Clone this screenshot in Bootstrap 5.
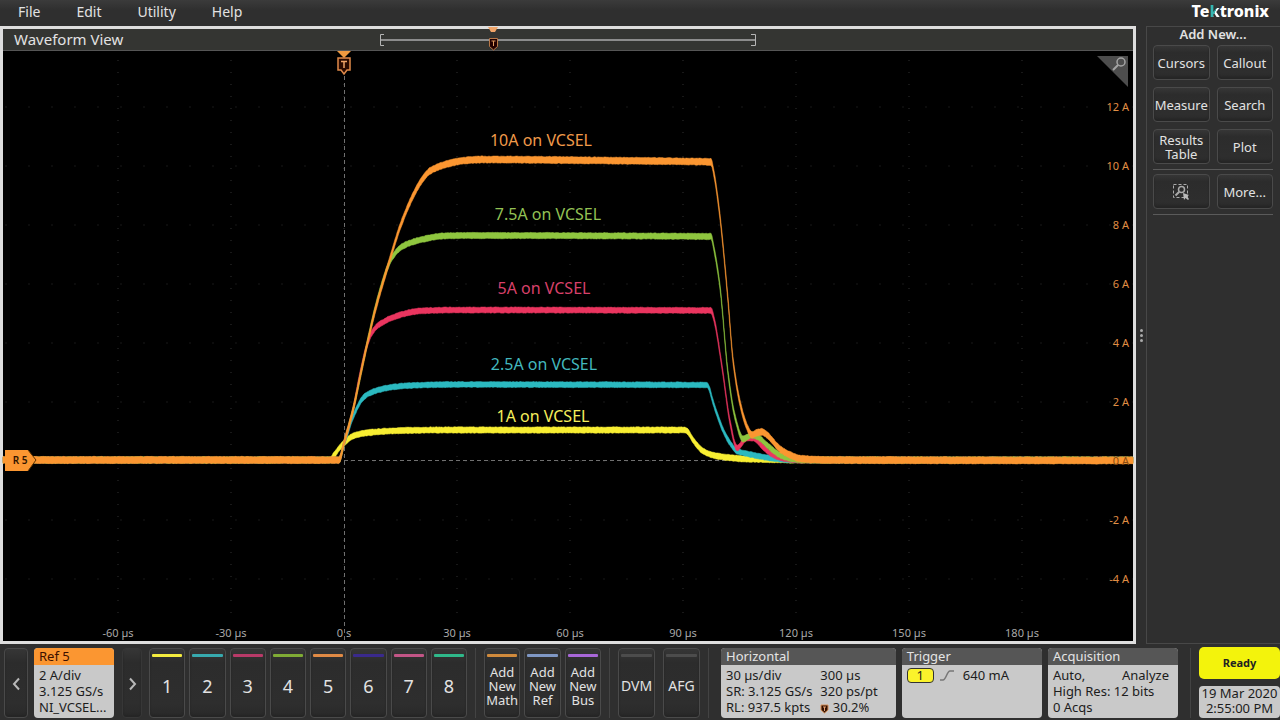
<!DOCTYPE html>
<html lang="en">
<head>
<meta charset="utf-8">
<meta name="viewport" content="width=device-width, initial-scale=1">
<title>Tektronix – Waveform View</title>
<link href="https://cdn.jsdelivr.net/npm/bootstrap@5.3.0/dist/css/bootstrap.min.css" rel="stylesheet">
<style>
  :root { --chrome: #2f2f2f; --line: #484848; --ink: #e2e2e2; --orange: #fb9631; }
  body { background: var(--chrome); color: var(--ink); font: 13px/16px "Noto Sans", sans-serif; }
  .menubar { height: 26px; background: linear-gradient(#3b3b3b, #2f2f2f 10px); }
  .menubar .menu-item { color: var(--ink); font-size: 14px; line-height: 23px; text-decoration: none; }
  .menus { gap: 36px; padding-left: 18px; }
  .brand-name { font-size: 16px; line-height: 22px; font-weight: 800; color: #fff; padding-right: 11px; }
  .brand-name span { color: transparent; background: linear-gradient(115deg, #35b5b0 55%, #fff 56%); background-clip: text; -webkit-background-clip: text; }

  .scope-view { border: 3px solid #dedede; background: #000; min-width: 0; }
  .view-head { display: grid; grid-template-columns: 1fr auto 1fr; height: 22px; background: #343532; border-bottom: 1px solid #555; }
  .view-title { font-size: 15px; line-height: 21px; padding-left: 11px; }
  .plot svg, .view-head svg { display: block; overflow: visible; }
  .zoom-corner { position: absolute; top: 5px; right: 5px; width: 31px; height: 31px; border: 0; padding: 0; background: none; }
  svg text { font-family: "Noto Sans", sans-serif; }
  .tick-label { font-size: 11px; }
  .trace-label { font-size: 16px; }

  .grip { width: 10px; }
  .grip i { width: 3px; height: 3px; background: #aaa; border-radius: 50%; }
  .grip { gap: 2px; }
  .side { width: 134px; border: 1px solid var(--line); border-right: 0; padding: 0 7px 0 6px; }
  .side h2 { font-size: 13px; line-height: 14px; font-weight: 600; }
  .side .pair { display: grid; grid-template-columns: 1fr 1fr; gap: 7px 7px; }
  .side hr { margin: 5px 0 4px; border-color: #5a5a5a; opacity: 1; }
  .key { color: var(--ink); background: linear-gradient(#363636, #2c2c2c 20%, #2e2e2e 80%, #292929); border: 1px solid #4a4a4a; border-radius: 4px; box-shadow: inset 0 -2px 2px #252525; padding: 0; line-height: 14px; }
  .side .key { height: 35px; }

  .dock { height: 76px; padding: 4px 0 2px 4px; }
  .dock .key { height: 70px; min-width: 0; position: relative; padding-top: 5px; }
  .dock .nav-key { width: 24px; padding: 0; }
  .dock .nav-key.flat { width: 20px; border-color: #373737; margin: 0 7px 0 8px; }
  .dock .key.lit::before { content: ""; position: absolute; left: 2px; right: 2px; top: 5px; height: 3px; border-radius: 1px; background: var(--c); }
  .keys { display: grid; grid-auto-flow: column; grid-auto-columns: 1fr; gap: 4px; }
  .keys.channels { width: 318px; }
  .keys.channels .key { font-size: 18px; }
  .keys.adds { width: 117px; }
  .keys.tools { width: 82px; gap: 8px; }
  .keys.tools .key { font-size: 14px; }
  .rule { width: 1px; background: #434343; margin: 0 8px; }
  .panels { gap: 6px; }
  .info { background: #c9c9c9; color: #1c1c1c; border-radius: 4px; overflow: hidden; height: 70px; }
  .info h3 { font-size: 13px; line-height: 17px; font-weight: 400; margin: 0; padding: 0 5px; background: #565656; color: #e4e4e4; }
  .info .lines { padding: 2px 5px 0; white-space: nowrap; }
  .info.ref { width: 80px; margin-left: 6px; }
  .info.ref h3 { background: var(--orange); color: #3c1000; }
  .info.horizontal { flex: 176 1 0; }
  .info.trigger { flex: 141 1 0; }
  .info.acq { flex: 131 1 0; }
  .src { background: #fbf32b; border: 1px solid #333; border-radius: 4px; width: 27px; height: 15px; line-height: 13px; text-align: center; }
  .clock { width: 81px; }
  .ready { height: 32px; border: 0; border-radius: 5px; background: #f3f30c; color: #222; font-size: 11px; font-weight: 700; margin-top: -1px; }
  .stamp { height: 32px; border-radius: 4px; background: #c9c9c9; color: #1c1c1c; line-height: 15px; text-align: center; white-space: nowrap; }
</style>
</head>
<body class="d-flex flex-column min-vh-100">
<header class="menubar d-flex justify-content-between">
  <nav class="menus d-flex">
    <a class="menu-item" href="#">File</a><a class="menu-item" href="#">Edit</a><a class="menu-item" href="#">Utility</a><a class="menu-item" href="#">Help</a>
  </nav>
  <div class="brand-name">Te<span>k</span>tronix</div>
</header>

<main class="d-flex flex-grow-1">
  <section class="scope-view flex-grow-1 d-flex flex-column">
    <div class="view-head">
      <div class="view-title">Waveform View</div>
      <svg width="378" height="22" viewBox="379 29 378 22" fill="none" aria-hidden="true">
        <path d="M380 40H755" stroke="#8c8c8c" stroke-width="2"/>
        <path d="M384 34.500H380.500V45.500H384M751 34.500H755.500V45.500H751" stroke="#b5b5b5"/>
        <path d="M488 27H498L495 32H491Z" fill="#f0a468"/>
        <path d="M489.500 38.500H497.500V46.500L493.500 50L489.500 46.500Z" fill="#200" stroke="#b87848"/>
        <path d="M491.500 41H495.500M493.500 41V46" stroke="#e09a60"/>
      </svg>
    </div>
    <div class="plot position-relative flex-grow-1">
      <svg id="plot" width="100%" viewBox="3 51 1130 590" role="img" aria-label="Current pulses on VCSEL">
        <g id="grid" stroke="#181818" fill="none"></g>
        <path d="M344.500 76V641M344 460.500H1133" stroke="#707070" stroke-dasharray="4 3" fill="none"/>
        <g id="time" class="tick-label" fill="#a8a8a8" text-anchor="middle"></g>
        <g id="traces"></g>
        <g id="amps" class="tick-label" fill="#e08f45" text-anchor="end"></g>
        <g class="trace-label" text-anchor="middle">
          <text x="541" y="146" fill="#f09a4a">10A on VCSEL</text>
          <text x="548" y="220" fill="#93c255">7.5A on VCSEL</text>
          <text x="544" y="294" fill="#d8406a">5A on VCSEL</text>
          <text x="544" y="370" fill="#43b8be">2.5A on VCSEL</text>
          <text x="543" y="422" fill="#f5ee5c">1A on VCSEL</text>
        </g>
        <path d="M337 51H351L344 58Z" fill="#f09a40"/>
        <path d="M338 58H350V70H347L344 74L341 70H338Z" fill="#2a0a00" stroke="#e08a4a" stroke-width="1.500"/>
        <path d="M341 61.500H347M344 61.500V68" stroke="#f0a468" stroke-width="1.500"/>
        <path d="M5 450H28L36 460L28 471H5Z" fill="#fb9631"/>
        <path d="M28 450L36 460L28 471" fill="none" stroke="#5a3000"/>
        <text x="20" y="464" font-size="10" font-weight="600" fill="#301400" text-anchor="middle">R 5</text>
      </svg>
      <button class="zoom-corner" aria-label="Zoom">
        <svg width="31" height="31" viewBox="0 0 31 31" fill="none"><path d="M0 0H31V31Z" fill="#4d4d4d"/><circle cx="24" cy="6" r="4" stroke="#a5a5a5" stroke-width="1.500"/><path d="M21 9L16 14" stroke="#a5a5a5" stroke-width="2"/></svg>
      </button>
    </div>
  </section>

  <div class="grip d-flex flex-column align-items-center justify-content-center"><i></i><i></i><i></i></div>
  <aside class="side">
    <h2 class="text-center mb-1">Add New...</h2>
    <div class="pair">
      <button class="key">Cursors</button><button class="key">Callout</button>
      <button class="key">Measure</button><button class="key">Search</button>
      <button class="key">Results<br>Table</button><button class="key">Plot</button>
    </div>
    <hr>
    <div class="pair">
      <button class="key d-flex align-items-center justify-content-center" aria-label="Draw a box">
        <svg width="18" height="18" viewBox="0 0 18 18" fill="none" stroke="#aaa"><rect x="1.500" y="1.500" width="14" height="13" stroke-dasharray="3 2"/><circle cx="9.500" cy="6.500" r="3" stroke-width="1.500"/><path d="M7 9L3.500 12.500" stroke-width="2"/><path d="M11 10L17 12L15 13.500L17 16L16 17L13.500 15L12 17Z" fill="#bbb" stroke="none"/></svg>
      </button>
      <button class="key">More...</button>
    </div>
    <hr>
  </aside>
</main>

<footer class="dock d-flex">
  <button class="key nav-key" aria-label="Previous"><svg width="9" height="14" viewBox="0 0 9 14" fill="none"><path d="M7 1.500L2 7L7 12.500" stroke="#b8b8b8" stroke-width="2"/></svg></button>
  <section class="info ref">
    <h3>Ref 5</h3>
    <div class="lines">2 A/div<br>3.125 GS/s<br>NI_VCSEL...</div>
  </section>
  <button class="key nav-key flat" aria-label="Next"><svg width="9" height="14" viewBox="0 0 9 14" fill="none"><path d="M2 1.500L7 7L2 12.500" stroke="#b8b8b8" stroke-width="2"/></svg></button>
  <div class="keys channels" id="channels"></div>
  <div class="rule"></div>
  <div class="keys adds">
    <button class="key lit" style="--c:#d08a3c">Add<br>New<br>Math</button>
    <button class="key lit" style="--c:#7f97c4">Add<br>New<br>Ref</button>
    <button class="key lit" style="--c:#a867d8">Add<br>New<br>Bus</button>
  </div>
  <div class="rule"></div>
  <div class="keys tools">
    <button class="key lit" style="--c:#4c4c4c">DVM</button>
    <button class="key lit" style="--c:#4c4c4c">AFG</button>
  </div>
  <div class="rule"></div>
  <div class="panels d-flex flex-grow-1 mx-1">
    <section class="info horizontal">
      <h3>Horizontal</h3>
      <div class="lines row g-0">
        <div class="col-auto pe-2">30 µs/div<br>SR: 3.125 GS/s<br>RL: 937.5 kpts</div>
        <div class="col-auto">300 µs<br>320 ps/pt<br><svg width="9" height="10" viewBox="0 0 9 10" fill="none"><path d="M1 1H8V6L4.500 9L1 6Z" fill="#301000" stroke="#d89058"/><path d="M3 3H6M4.500 3V7" stroke="#e8a070"/></svg> 30.2%</div>
      </div>
    </section>
    <section class="info trigger">
      <h3>Trigger</h3>
      <div class="lines d-flex align-items-center"><span class="src">1</span><svg class="mx-1" width="17" height="14" viewBox="0 0 17 14" fill="none"><path d="M2 12H5C8 12 9 3 12 3H16" stroke="#777" stroke-width="1.500"/></svg><span class="ms-1">640 mA</span></div>
    </section>
    <section class="info acq">
      <h3>Acquisition</h3>
      <div class="lines"><div class="d-flex justify-content-between pe-1"><span>Auto,</span><span>Analyze</span></div>High Res: 12 bits<br>0 Acqs</div>
    </section>
  </div>
  <div class="rule"></div>
  <div class="clock d-flex flex-column justify-content-between">
    <button class="ready">Ready</button>
    <div class="stamp">19 Mar 2020<br>2:55:00 PM</div>
  </div>
</footer>

<script src="https://cdn.jsdelivr.net/npm/bootstrap@5.3.0/dist/js/bootstrap.bundle.min.js"></script>
<script>
const NS = 'http://www.w3.org/2000/svg';
function add(parent, tag, attrs, text) {
  const e = document.createElementNS(NS, tag);
  for (const k in attrs) e.setAttribute(k, attrs[k]);
  if (text) e.textContent = text;
  document.getElementById(parent).appendChild(e);
}
['#f4ec3f', '#37a9ae', '#b83a68', '#7fab35', '#e08a45', '#3a2a8c', '#c25586', '#2fb88a'].forEach((c, i) => {
  const b = document.createElement('button');
  b.className = 'key lit'; b.style.setProperty('--c', c); b.textContent = i + 1;
  document.getElementById('channels').appendChild(b);
});
// Graticule: one division is 113 wide (30 µs) and 59 high (2 A)
for (let i = -2; i <= 6; i++) {
  const x = 344 + i * 113;
  add('grid', 'path', { d: `M${x} 60V620`, 'stroke-width': 2, 'stroke-dasharray': '1 11' });
  add('time', 'text', { x, y: 637 }, i ? i * 30 + ' µs' : '0 s');
}
for (let a = -4; a <= 12; a += 2) {
  const y = Math.round(461 - a * 29.5);
  add('grid', 'path', { d: `M5 ${y}H1133`, 'stroke-width': 1, 'stroke-dasharray': '2 21' });
  add('amps', 'text', a ? { x: 1129, y: y + 4 } : { x: 1129, y: y + 4, fill: '#8a4a10' }, a + ' A');
}
// Each trace: colour, half band height, points
const traces = [
  ['#f8ee32', 2.6, [[3,460],[330,460],[334,455],[344,443],[353,436],[370,432.5],[403,430.5],[440,430],[685,430],[688,432],[693,440],[703,451],[717,456],[747,459],[800,460],[1133,460]]],
  ['#2bb9c0', 2.4, [[3,460],[339,460],[344,444],[347,435],[353,417],[363,398],[370,393],[387,388],[410,385.5],[453,384.5],[707,385],[709,388],[713,402],[723,430],[730,443],[737,451],[753,455],[770,458],[793,460],[1133,460]]],
  ['#ea355f', 2.5, [[3,460],[339,460],[344,443],[353,410],[360,374],[368,342],[373,331],[380,324],[400,315],[420,311],[453,310],[711,310.5],[714,319],[722,367],[730,422],[737,448],[747,438],[753,438],[763,447],[773,455],[787,459],[800,460],[1133,460]]],
  ['#8fc63f', 2.6, [[3,460],[339,460],[344,443],[353,410],[363,363],[375,309],[387,269],[393,256],[403,246],[420,240],[443,236],[470,235.5],[711,236.5],[714,249],[720,287],[728,373],[735,417],[743,439],[752,435],[758,437],[767,445],[780,455],[793,459],[805,460],[1133,460]]],
  ['#fb9631', 3, [[3,460],[339,460],[344,443],[353,410],[363,363],[375,311],[387,269],[403,219],[420,183],[430,171],[447,164],[465,160.5],[483,159.5],[600,160.5],[711,162],[714,174],[720,217],[728,300],[733,360],[740,403],[747,427],[752,435],[756,433],[762,432],[767,435],[780,449],[790,455],[803,459],[830,460],[1133,460.5]]]
];
// Monotone cubic interpolation keeps the flat tops free of overshoot
function sample(p) {
  const n = p.length, s = [], m = [];
  for (let i = 0; i < n - 1; i++) s.push((p[i+1][1] - p[i][1]) / (p[i+1][0] - p[i][0]));
  for (let i = 0; i < n; i++) {
    const a = s[i-1] ?? 0, b = s[i] ?? 0;
    m.push(a * b <= 0 ? 0 : 2 * a * b / (a + b));
  }
  const out = [];
  for (let i = 0; i < n - 1; i++) {
    const h = p[i+1][0] - p[i][0], steps = Math.max(2, Math.round(h));
    for (let k = 0; k < steps; k++) {
      const t = k / steps, t2 = t * t, t3 = t2 * t;
      out.push([p[i][0] + h * t, (2*t3 - 3*t2 + 1) * p[i][1] + (t3 - 2*t2 + t) * h * m[i] + (3*t2 - 2*t3) * p[i+1][1] + (t3 - t2) * h * m[i+1]]);
    }
  }
  out.push(p[n-1]);
  return out;
}
let seed = 7;
const noise = () => (seed = (seed * 16807) % 2147483647) / 2147483647 * 0.7;
for (const [c, half, pts] of traces) {
  const line = sample(pts);
  const top = line.map(([x, y]) => `${x} ${y - half - noise()}`);
  const bottom = line.map(([x, y]) => `${x} ${y + half + noise()}`).reverse();
  add('traces', 'path', { d: 'M' + top.concat(bottom).join('L') + 'Z', fill: c, stroke: c, 'stroke-width': 0.5 });
}
</script>
</body>
</html>
